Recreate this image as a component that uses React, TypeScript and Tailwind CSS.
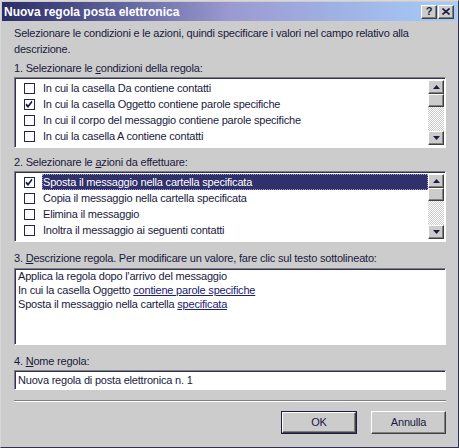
import React from 'react';

const raised =
  'border border-t-white border-l-white border-r-[#404040] border-b-[#404040] shadow-[inset_-1px_-1px_#808080]';
const sunken =
  'border border-t-[#808080] border-l-[#808080] border-r-white border-b-white shadow-[inset_1px_1px_#30305a]';

const Check = ({ checked }: { checked?: boolean }) => (
  <span className="w-[11px] h-[11px] border border-[#24244e] bg-white flex items-center justify-center shrink-0">
    {checked && (
      <svg width="9" height="9" viewBox="0 0 9 9">
        <path d="M1 4 L3 6 L7 1 M1 5 L3 7 L7 2" stroke="#1c1c44" strokeWidth="1.2" fill="none" />
      </svg>
    )}
  </span>
);

const Arrow = ({ up }: { up?: boolean }) => (
  <svg width="7" height="4" viewBox="0 0 7 4">
    <path d={up ? 'M0 4 L3.5 0 L7 4 Z' : 'M0 0 L3.5 4 L7 0 Z'} fill="#1c1c44" />
  </svg>
);

const ScrollBar = () => (
  <div className="w-[16px] flex flex-col shrink-0">
    <div className={`h-[14px] bg-[#cccccc] flex items-center justify-center ${raised}`}>
      <Arrow up />
    </div>
    <div className={`h-[13px] bg-[#cccccc] ${raised}`} />
    <div className="flex-1 bg-[repeating-conic-gradient(#ffffff_0_25%,#cccccc_0_50%)] bg-[length:2px_2px]" />
    <div className={`h-[14px] bg-[#cccccc] flex items-center justify-center ${raised}`}>
      <Arrow />
    </div>
  </div>
);

interface Row {
  text: string;
  checked?: boolean;
  selected?: boolean;
}

const CheckList = ({ rows }: { rows: Row[] }) => (
  <div className={`h-[71px] bg-white flex p-[2px] pr-[1px] ${sunken}`}>
    <div className="flex-1 flex flex-col">
      {rows.map((r) => (
        <div key={r.text} className="h-[16px] flex items-center">
          <div className="w-[25px] pl-[7px] flex items-center">
            <Check checked={r.checked} />
          </div>
          <div
            className={`flex-1 h-[16px] flex items-center pl-[1px] ${
              r.selected ? 'bg-[#30306a] text-white outline-1 outline-dotted outline-offset-[-1px] outline-[#9a9ad0]' : ''
            }`}
          >
            {r.text}
          </div>
        </div>
      ))}
    </div>
    <ScrollBar />
  </div>
);

export default function App() {
  return (
    <div
      className="w-[459px] h-[448px] bg-[#cccccc] text-[#1a1a40] text-[11px] tracking-[-0.2px] border border-t-[#d8d8d8] border-l-[#d8d8d8] border-r-[#303050] border-b-[#303050] p-[1px] flex flex-col"
      style={{ fontFamily: '"Liberation Sans", Arial, sans-serif' }}
    >
      {/* titolo */}
      <div className="h-[19px] flex items-center pl-[2px] pr-[3px] bg-gradient-to-r from-[#2c2c68] via-[#9a9ad0] to-[#a4ccfa]">
        <span className="flex-1 text-white font-bold text-[12px] tracking-normal">Nuova regola posta elettronica</span>
        <div className="flex gap-[1px]">
          <div className={`w-[16px] h-[14px] bg-[#cccccc] flex items-center justify-center font-bold text-[11px] leading-none ${raised}`}>
            ?
          </div>
          <div className={`w-[16px] h-[14px] bg-[#cccccc] flex items-center justify-center ${raised}`}>
            <svg width="8" height="7" viewBox="0 0 8 7">
              <path d="M0.5 0.5 L7.5 6.5 M7.5 0.5 L0.5 6.5" stroke="#1c1c44" strokeWidth="1.6" />
            </svg>
          </div>
        </div>
      </div>

      <div className="flex-1 flex flex-col pl-[12px] pr-[11px]">
        <p className="mt-[4px] leading-[16px] pr-[30px]">
          Selezionare le condizioni e le azioni, quindi specificare i valori nel campo relativo alla descrizione.
        </p>

        <div className="mt-[3px] leading-[16px]">
          1. Selezionare le <u>c</u>ondizioni della regola:
        </div>
        <div className="mt-[1px]">
          <CheckList
            rows={[
              { text: 'In cui la casella Da contiene contatti' },
              { text: 'In cui la casella Oggetto contiene parole specifiche', checked: true },
              { text: 'In cui il corpo del messaggio contiene parole specifiche' },
              { text: 'In cui la casella A contiene contatti' },
            ]}
          />
        </div>

        <div className="mt-[6px] leading-[16px]">
          2. Selezionare le <u>a</u>zioni da effettuare:
        </div>
        <div className="mt-[1px]">
          <CheckList
            rows={[
              { text: 'Sposta il messaggio nella cartella specificata', checked: true, selected: true },
              { text: 'Copia il messaggio nella cartella specificata' },
              { text: 'Elimina il messaggio' },
              { text: 'Inoltra il messaggio ai seguenti contatti' },
            ]}
          />
        </div>

        <div className="mt-[8px] leading-[16px]">
          3. <u>D</u>escrizione regola. Per modificare un valore, fare clic sul testo sottolineato:
        </div>
        <div className={`mt-[2px] h-[77px] bg-white px-[3px] leading-[14px] ${sunken}`}>
          <div>Applica la regola dopo l'arrivo del messaggio</div>
          <div>
            In cui la casella Oggetto <span className="underline text-[#20206e]">contiene parole specifiche</span>
          </div>
          <div>
            Sposta il messaggio nella cartella <span className="underline text-[#20206e]">specificata</span>
          </div>
        </div>

        <div className="mt-[8px] leading-[16px]">
          4. <u>N</u>ome regola:
        </div>
        <div className={`mt-[1px] h-[20px] bg-white flex items-center px-[3px] ${sunken}`}>
          Nuova regola di posta elettronica n. 1
        </div>

        <div className="mt-[10px] h-[2px] border-t border-t-[#808080] border-b border-b-white" />

        <div className="mt-[9px] flex justify-end gap-[14px]">
          <div className="w-[76px] h-[23px] border border-[#1c1c44]">
            <div className={`w-full h-full bg-[#cccccc] flex items-center justify-center ${raised}`}>OK</div>
          </div>
          <div className={`w-[75px] h-[23px] bg-[#cccccc] flex items-center justify-center ${raised}`}>Annulla</div>
        </div>
      </div>
    </div>
  );
}
